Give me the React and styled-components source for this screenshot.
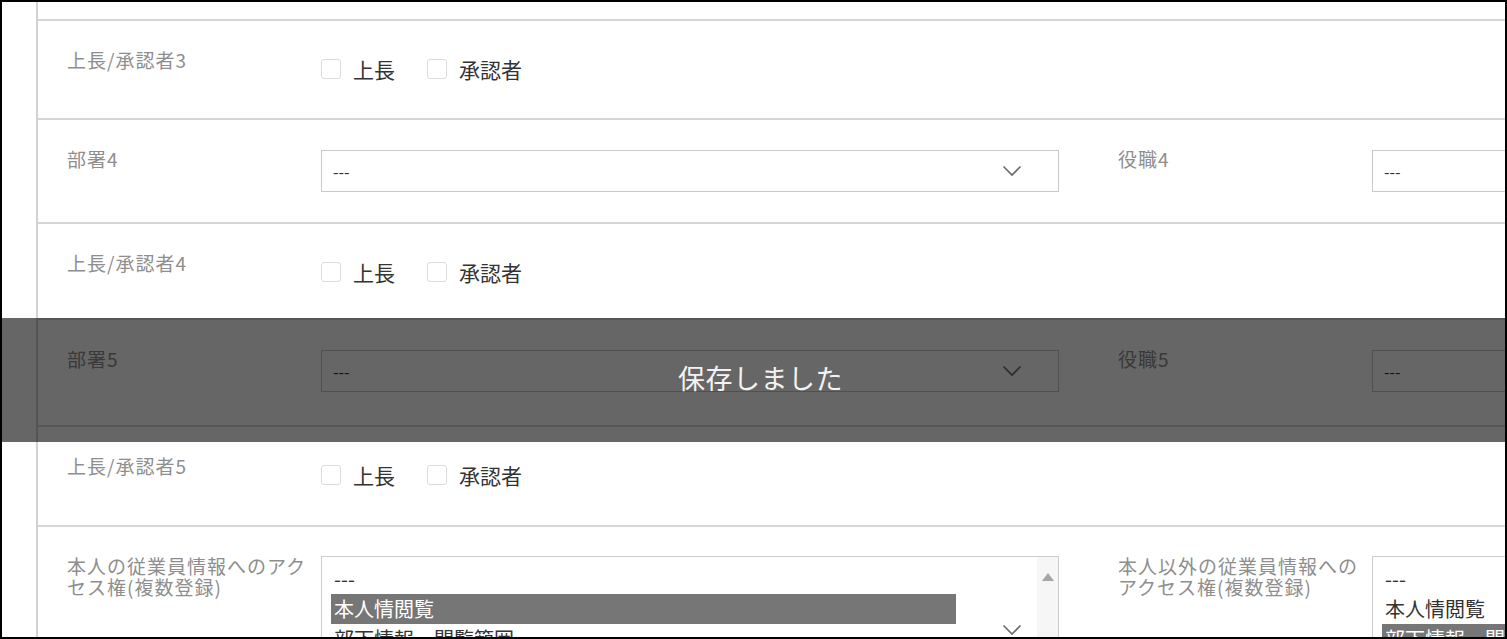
import React from "react";
import styled, { createGlobalStyle } from "styled-components";

const Global = createGlobalStyle`
  html, body { margin: 0; padding: 0; background: #fff; }
  body { font-family: "Noto Sans CJK JP", "Noto Sans", sans-serif; }
  * { box-sizing: border-box; }
`;

const Frame = styled.div`
  position: relative;
  width: 1507px;
  height: 639px;
  border: 2px solid #000;
  overflow: hidden;
  background: #fff;
`;

const Layout = styled.div`
  display: flex;
  height: 100%;
`;

const Gutter = styled.div`
  width: 34px;
  flex: none;
`;

const Panel = styled.div`
  flex: none;
  width: 2300px;
  border-left: 2px solid #d2d2d2;
`;

const TopStub = styled.div`
  height: 19px;
  border-bottom: 2px solid #d6d6d6;
`;

const Row = styled.div`
  display: flex;
  align-items: flex-start;
  gap: 59px;
  height: ${(p) => p.$h}px;
  padding: 28px 0 0 29px;
  border-bottom: ${(p) => (p.$last ? "none" : "2px solid #d6d6d6")};
`;

const Field = styled.div`
  display: flex;
  align-items: flex-start;
  flex: none;
`;

const Label = styled.div`
  width: 248px;
  margin: 0 6px 0 0;
  font-size: 19px;
  letter-spacing: 1px;
  line-height: 21px;
  color: #8e8e8e;
  flex: none;
`;

const CheckGroup = styled.div`
  display: flex;
  align-items: center;
  gap: 32px;
  height: 30px;
  margin-top: 5px;
`;

const CheckItem = styled.label`
  display: flex;
  align-items: center;
  gap: 12px;
  font-size: 21px;
  color: #333;
  line-height: 30px;
`;

const Box = styled.span`
  width: 20px;
  height: 20px;
  border: 1px solid #dcdcdc;
  border-radius: 3px;
  background: #fff;
`;

const Select = styled.div`
  width: 738px;
  height: 42px;
  margin-top: 2px;
  display: flex;
  align-items: center;
  justify-content: space-between;
  padding: 0 36px 0 11px;
  border: 1px solid #c9c9c9;
  font-size: 16px;
  color: #333;
  background: #fff;
`;

const ListBox = styled.div`
  position: relative;
  width: 738px;
  height: 148px;
  margin-top: 1px;
  padding: 7px 0 0 9px;
  border: 1px solid #cdcdcd;
  background: #fff;
  overflow: hidden;
`;

const Option = styled.div`
  width: 625px;
  padding-left: 3px;
  font-size: 20px;
  line-height: 30px;
  height: 30px;
  white-space: nowrap;
  color: ${(p) => (p.$sel ? "#fff" : "#333")};
  background: ${(p) => (p.$sel ? "#767676" : "transparent")};
`;

const ScrollTrack = styled.div`
  position: absolute;
  top: 0;
  right: 0;
  bottom: 0;
  width: 21px;
  background: #f6f6f6;
  display: flex;
  justify-content: center;
  padding-top: 16px;
`;

const UpArrow = styled.span`
  width: 0;
  height: 0;
  border-left: 6px solid transparent;
  border-right: 6px solid transparent;
  border-bottom: 8px solid #a6a6a6;
`;

const ListChevron = styled.div`
  position: absolute;
  right: 36px;
  top: 50%;
  margin-top: -6px;
  display: flex;
`;

const Toast = styled.div`
  position: absolute;
  left: 0;
  right: 0;
  top: 316px;
  height: 124px;
  background: rgba(0, 0, 0, 0.6);
  display: flex;
  align-items: center;
  justify-content: center;
  padding: 0 0 6px 14px;
  font-size: 27px;
  color: #f2f2f2;
  letter-spacing: 0.5px;
`;

const Chevron = () => (
  <svg width="20" height="12" viewBox="0 0 20 12">
    <polyline points="1.5,1.5 10,10 18.5,1.5" fill="none" stroke="#6e6e6e" strokeWidth="1.7" />
  </svg>
);

const Checks = () => (
  <CheckGroup>
    <CheckItem>
      <Box />
      上長
    </CheckItem>
    <CheckItem>
      <Box />
      承認者
    </CheckItem>
  </CheckGroup>
);

const SelectField = () => (
  <Select>
    <span>---</span>
    <Chevron />
  </Select>
);

const options = ["---", "本人情閲覧", "部下情報　閲覧範囲", "部下情報　編集範囲"];

const MultiList = ({ selected, scroll }) => (
  <ListBox>
    {options.map((o, i) => (
      <Option key={o} $sel={i === selected}>
        {o}
      </Option>
    ))}
    {scroll && (
      <ScrollTrack>
        <UpArrow />
      </ScrollTrack>
    )}
    <ListChevron>
      <Chevron />
    </ListChevron>
  </ListBox>
);

export default function App() {
  return (
    <>
      <Global />
      <Frame>
        <Layout>
          <Gutter />
          <Panel>
            <TopStub />
            <Row $h={99}>
              <Field>
                <Label>上長/承認者3</Label>
                <Checks />
              </Field>
            </Row>
            <Row $h={104}>
              <Field>
                <Label>部署4</Label>
                <SelectField />
              </Field>
              <Field>
                <Label>役職4</Label>
                <SelectField />
              </Field>
            </Row>
            <Row $h={96}>
              <Field>
                <Label>上長/承認者4</Label>
                <Checks />
              </Field>
            </Row>
            <Row $h={107}>
              <Field>
                <Label>部署5</Label>
                <SelectField />
              </Field>
              <Field>
                <Label>役職5</Label>
                <SelectField />
              </Field>
            </Row>
            <Row $h={100}>
              <Field>
                <Label>上長/承認者5</Label>
                <Checks />
              </Field>
            </Row>
            <Row $h={200} $last>
              <Field>
                <Label>本人の従業員情報へのアクセス権(複数登録)</Label>
                <MultiList selected={1} scroll />
              </Field>
              <Field>
                <Label>本人以外の従業員情報へのアクセス権(複数登録)</Label>
                <MultiList selected={2} />
              </Field>
            </Row>
          </Panel>
        </Layout>
        <Toast>保存しました</Toast>
      </Frame>
    </>
  );
}
